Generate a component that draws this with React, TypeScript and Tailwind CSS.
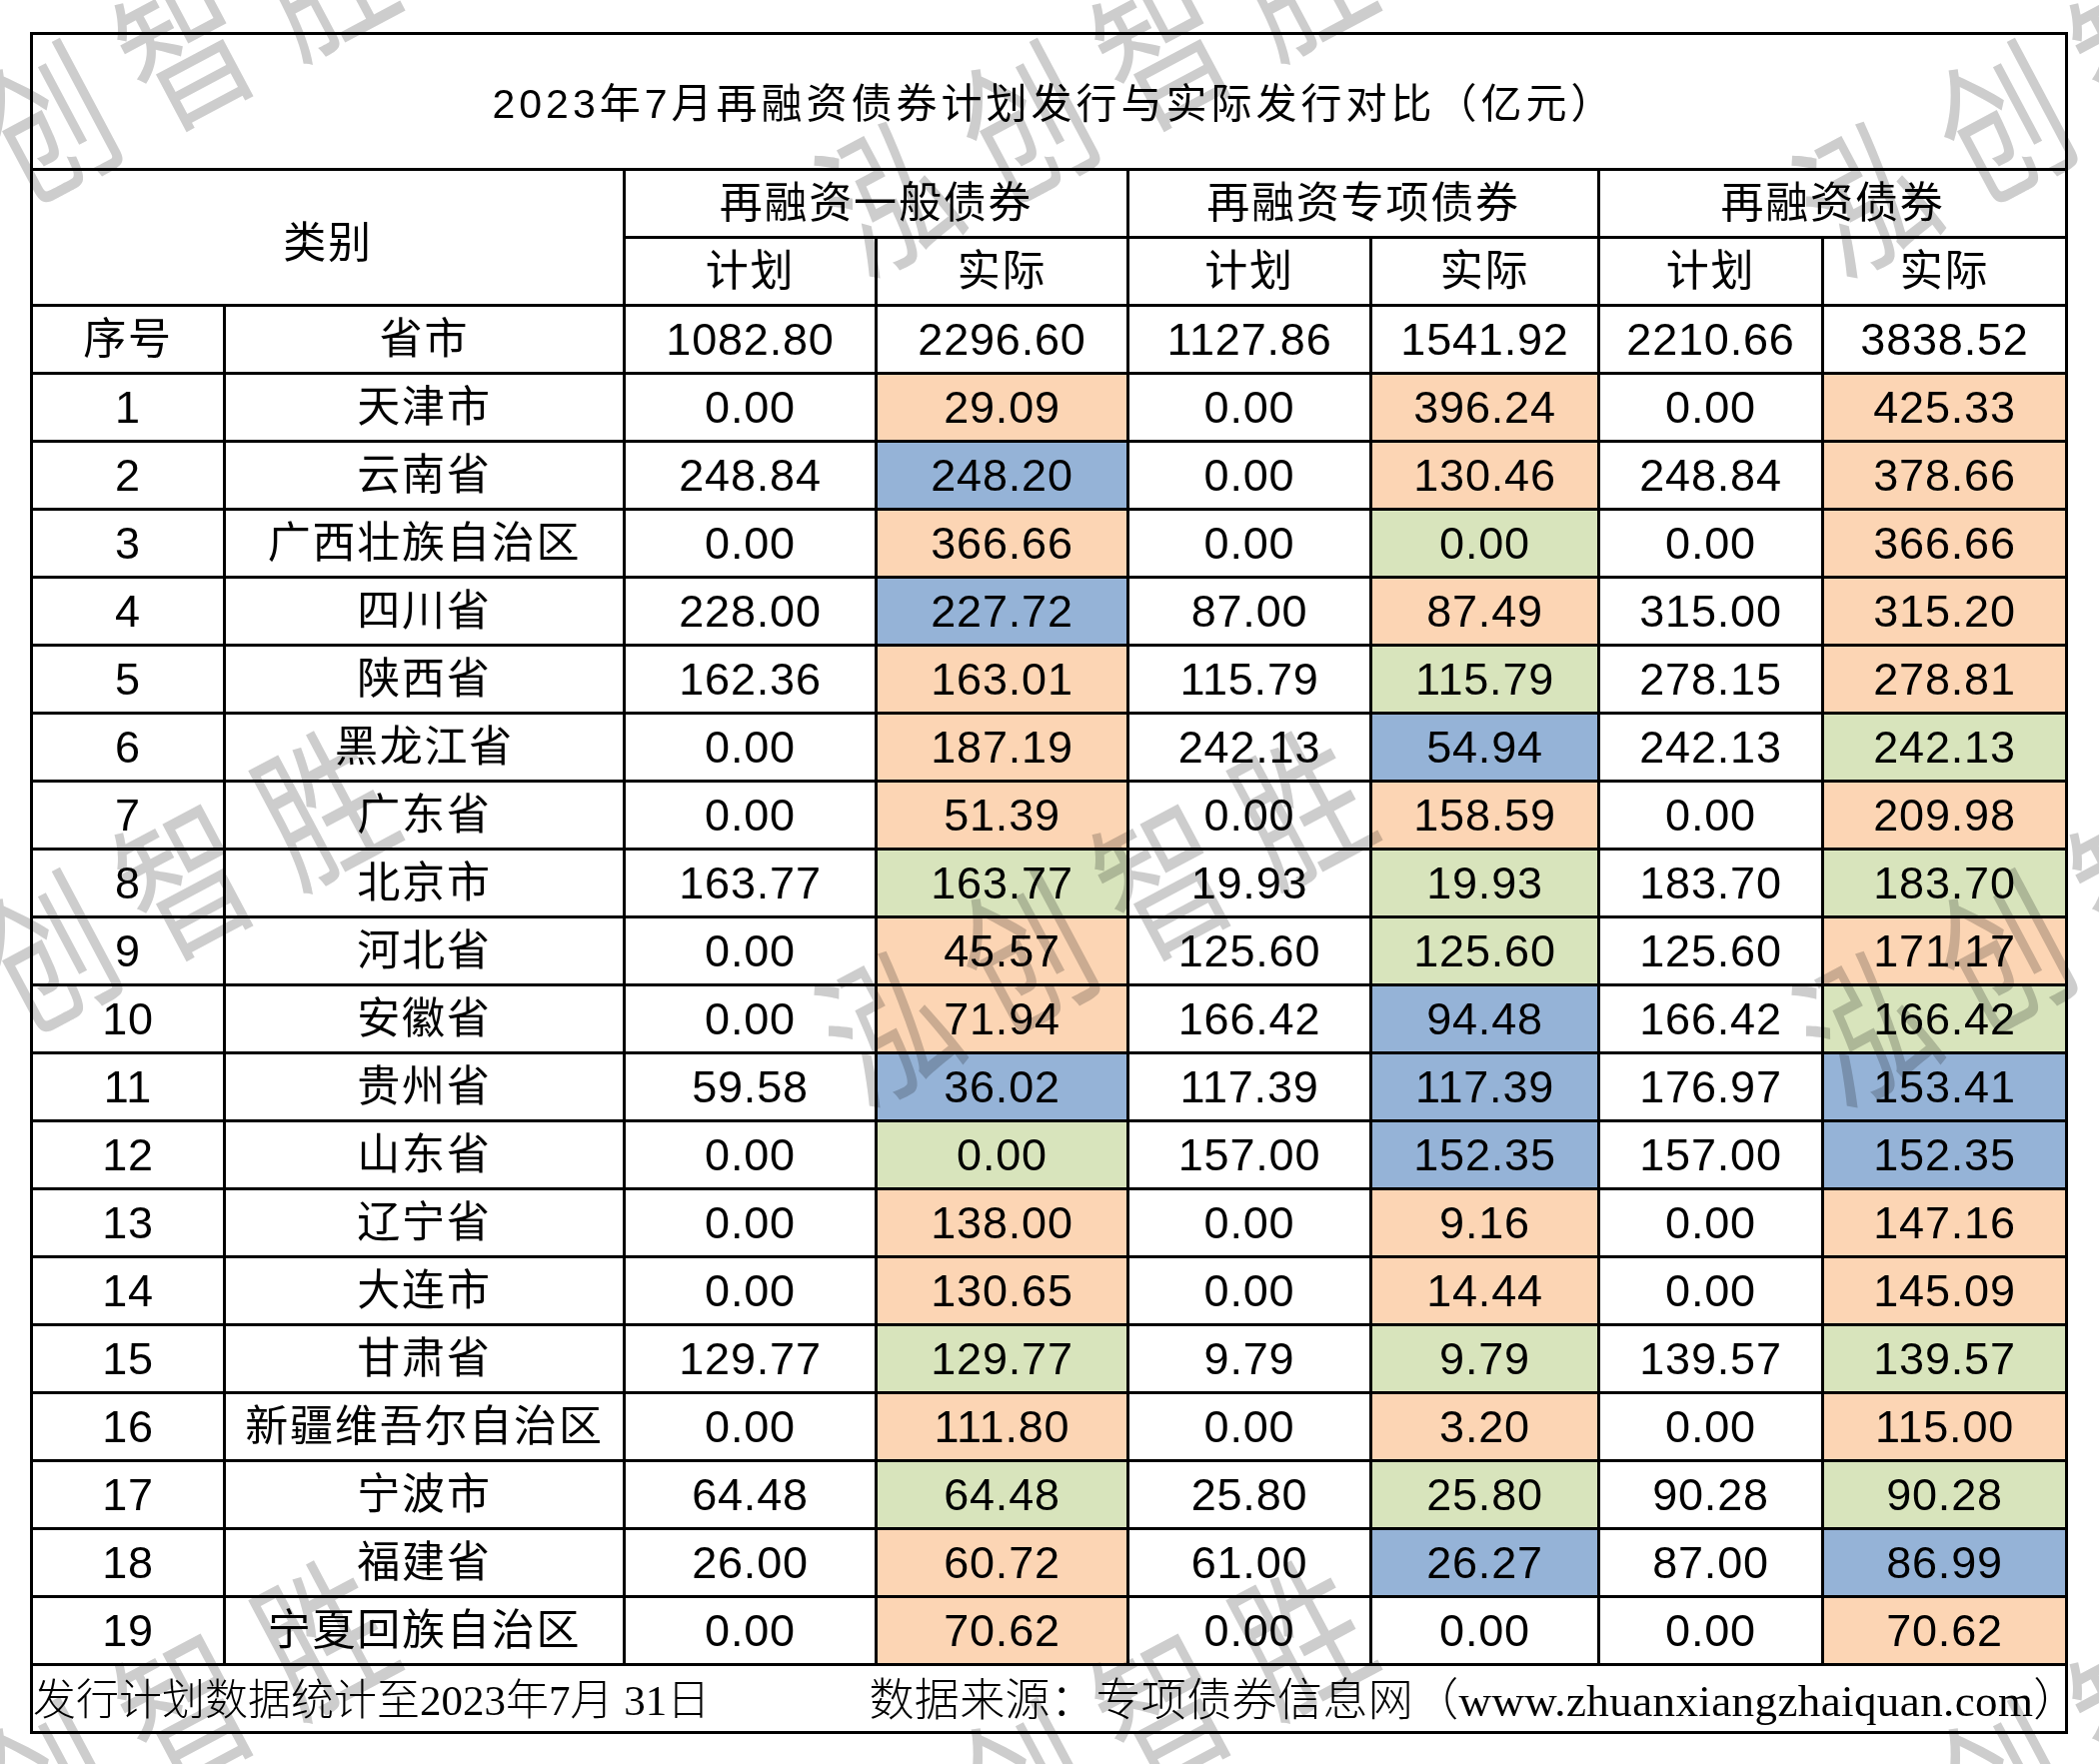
type Tone = "o" | "b" | "g" | ""

interface Row {
  no: number
  name: string
  cells: [string, string, Tone][]
}

const tone: Record<Tone, string> = {
  o: "bg-[#fcd5b4]",
  b: "bg-[#95b3d7]",
  g: "bg-[#d8e4bc]",
  "": "bg-white",
}

const rows: Row[] = [
  { no: 1, name: "天津市", cells: [["0.00", "29.09", "o"], ["0.00", "396.24", "o"], ["0.00", "425.33", "o"]] },
  { no: 2, name: "云南省", cells: [["248.84", "248.20", "b"], ["0.00", "130.46", "o"], ["248.84", "378.66", "o"]] },
  { no: 3, name: "广西壮族自治区", cells: [["0.00", "366.66", "o"], ["0.00", "0.00", "g"], ["0.00", "366.66", "o"]] },
  { no: 4, name: "四川省", cells: [["228.00", "227.72", "b"], ["87.00", "87.49", "o"], ["315.00", "315.20", "o"]] },
  { no: 5, name: "陕西省", cells: [["162.36", "163.01", "o"], ["115.79", "115.79", "g"], ["278.15", "278.81", "o"]] },
  { no: 6, name: "黑龙江省", cells: [["0.00", "187.19", "o"], ["242.13", "54.94", "b"], ["242.13", "242.13", "g"]] },
  { no: 7, name: "广东省", cells: [["0.00", "51.39", "o"], ["0.00", "158.59", "o"], ["0.00", "209.98", "o"]] },
  { no: 8, name: "北京市", cells: [["163.77", "163.77", "g"], ["19.93", "19.93", "g"], ["183.70", "183.70", "g"]] },
  { no: 9, name: "河北省", cells: [["0.00", "45.57", "o"], ["125.60", "125.60", "g"], ["125.60", "171.17", "o"]] },
  { no: 10, name: "安徽省", cells: [["0.00", "71.94", "o"], ["166.42", "94.48", "b"], ["166.42", "166.42", "g"]] },
  { no: 11, name: "贵州省", cells: [["59.58", "36.02", "b"], ["117.39", "117.39", "b"], ["176.97", "153.41", "b"]] },
  { no: 12, name: "山东省", cells: [["0.00", "0.00", "g"], ["157.00", "152.35", "b"], ["157.00", "152.35", "b"]] },
  { no: 13, name: "辽宁省", cells: [["0.00", "138.00", "o"], ["0.00", "9.16", "o"], ["0.00", "147.16", "o"]] },
  { no: 14, name: "大连市", cells: [["0.00", "130.65", "o"], ["0.00", "14.44", "o"], ["0.00", "145.09", "o"]] },
  { no: 15, name: "甘肃省", cells: [["129.77", "129.77", "g"], ["9.79", "9.79", "g"], ["139.57", "139.57", "g"]] },
  { no: 16, name: "新疆维吾尔自治区", cells: [["0.00", "111.80", "o"], ["0.00", "3.20", "o"], ["0.00", "115.00", "o"]] },
  { no: 17, name: "宁波市", cells: [["64.48", "64.48", "g"], ["25.80", "25.80", "g"], ["90.28", "90.28", "g"]] },
  { no: 18, name: "福建省", cells: [["26.00", "60.72", "o"], ["61.00", "26.27", "b"], ["87.00", "86.99", "b"]] },
  { no: 19, name: "宁夏回族自治区", cells: [["0.00", "70.62", "o"], ["0.00", "0.00", ""], ["0.00", "70.62", "o"]] },
]

// watermark centres, repeated diagonally over the sheet
const marks = [
  "left-[113px] top-[80px]",
  "left-[1091px] top-[80px]",
  "left-[2069px] top-[80px]",
  "left-[113px] top-[910px]",
  "left-[1091px] top-[910px]",
  "left-[2069px] top-[910px]",
  "left-[113px] top-[1740px]",
  "left-[1091px] top-[1740px]",
  "left-[2069px] top-[1740px]",
]

const Cell = ({ children, className = "" }: { children?: React.ReactNode; className?: string }) => (
  <div className={`flex items-center justify-center whitespace-nowrap ${className || "bg-white"}`}>{children}</div>
)

// numbers use a slightly larger face than the CJK labels
const Num = ({ children, className = "" }: { children?: React.ReactNode; className?: string }) => (
  <Cell className={`text-[45px] tracking-[0.8px] ${className || "bg-white"}`}>{children}</Cell>
)

const App = () => {
  return (
    <div className="relative w-[2100px] h-[1765px] overflow-hidden bg-white pl-[30px] pt-[32px] text-black font-['Liberation_Sans','Noto_Sans_CJK_SC',sans-serif]">
      {/* sheet */}
      <div className="grid w-fit grid-cols-[190px_397px_249px_249px_240px_225px_221px_241px] grid-rows-[133px_repeat(23,65px)] gap-[3px] bg-black p-[3px] text-[43px] tracking-[1.8px]">
        {/* title */}
        <Cell className="col-span-8 bg-white pt-[6px] pl-[10px] text-[41px] tracking-[4px]">
          2023年7月再融资债券计划发行与实际发行对比（亿元）
        </Cell>

        {/* header */}
        <Cell className="col-span-2 row-span-2 bg-white pt-[12px]">类别</Cell>
        <Cell className="col-span-2 bg-white">再融资一般债券</Cell>
        <Cell className="col-span-2 bg-white">再融资专项债券</Cell>
        <Cell className="col-span-2 bg-white">再融资债券</Cell>
        <Cell>计划</Cell>
        <Cell>实际</Cell>
        <Cell>计划</Cell>
        <Cell>实际</Cell>
        <Cell>计划</Cell>
        <Cell>实际</Cell>

        {/* totals */}
        <Cell>序号</Cell>
        <Cell>省市</Cell>
        <Num>1082.80</Num>
        <Num>2296.60</Num>
        <Num>1127.86</Num>
        <Num>1541.92</Num>
        <Num>2210.66</Num>
        <Num>3838.52</Num>

        {/* data rows */}
        {rows.map((r) => (
          <div key={r.no} className="contents">
            <Num>{r.no}</Num>
            <Cell>{r.name}</Cell>
            {r.cells.map(([plan, actual, t], i) => (
              <div key={i} className="contents">
                <Num>{plan}</Num>
                <Num className={tone[t]}>{actual}</Num>
              </div>
            ))}
          </div>
        ))}

        {/* footer */}
        <div className="col-span-8 flex items-center bg-white pt-[6px] tracking-normal font-['Liberation_Serif','Noto_Sans_CJK_SC',serif] font-light">
          <div className="w-[846px] text-[43px]">发行计划数据统计至2023年7月 31日</div>
          <div className="text-[45px] tracking-[0.4px]">数据来源：专项债券信息网（www.zhuanxiangzhaiquan.com）</div>
        </div>
      </div>

      {/* watermark */}
      {marks.map((m) => (
        <div
          key={m}
          className={`pointer-events-none absolute ${m} -translate-x-1/2 -translate-y-1/2 -rotate-[28deg] scale-x-[0.78] whitespace-nowrap pl-[42px] text-[158px] leading-none tracking-[42px] text-[#cdcdcd] mix-blend-multiply font-['Noto_Sans_CJK_SC',sans-serif]`}
        >
          泓创智胜
        </div>
      ))}
    </div>
  )
}

export default App
